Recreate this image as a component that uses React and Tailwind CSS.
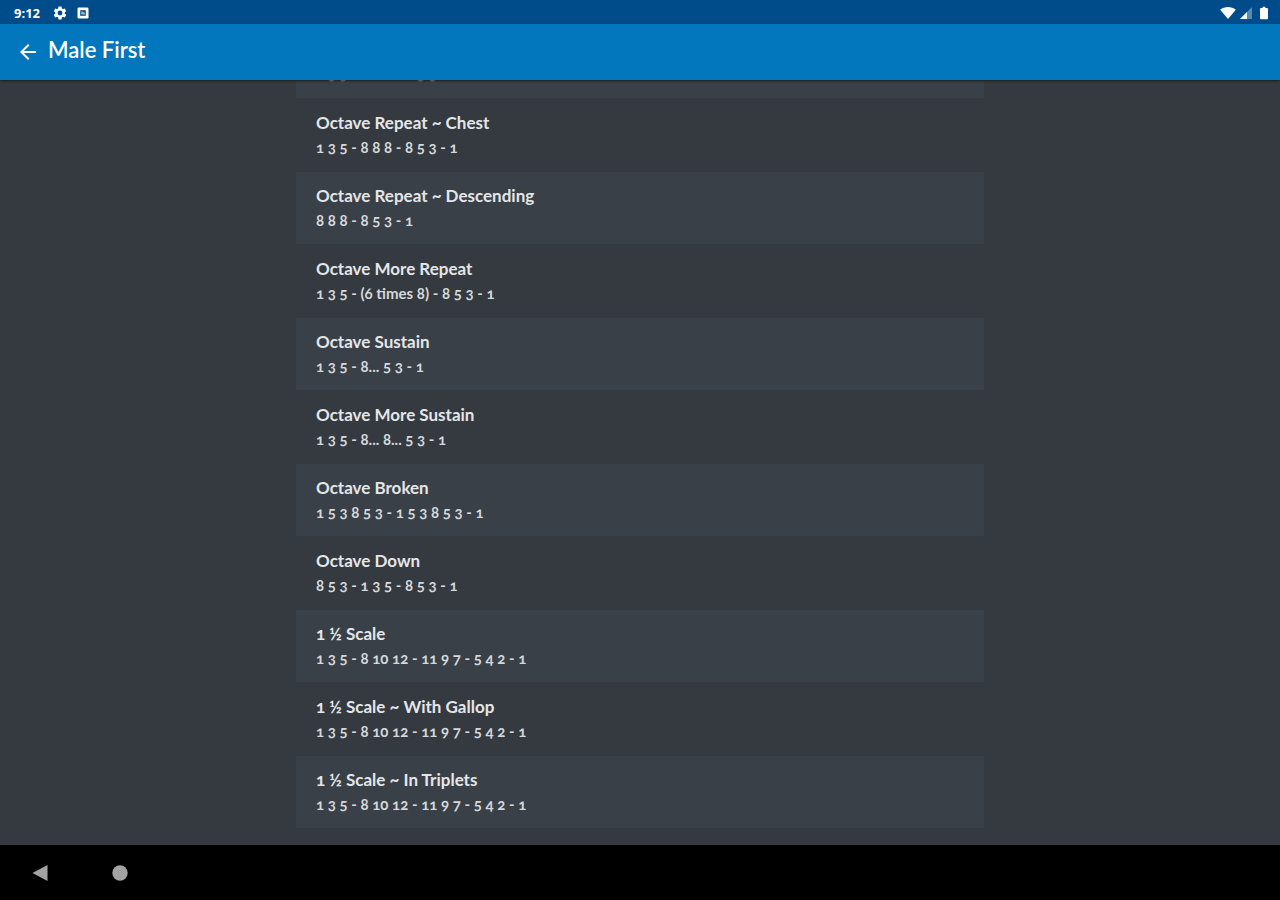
import React from "react";

const exercises = [
  { title: "Octave Repeat", notes: "1 3 5 - 8 8 8 - 8 5 3 - 1" },
  { title: "Octave Repeat ~ Chest", notes: "1 3 5 - 8 8 8 - 8 5 3 - 1" },
  { title: "Octave Repeat ~ Descending", notes: "8 8 8 - 8 5 3 - 1" },
  { title: "Octave More Repeat", notes: "1 3 5 - (6 times 8) - 8 5 3 - 1" },
  { title: "Octave Sustain", notes: "1 3 5 - 8... 5 3 - 1" },
  { title: "Octave More Sustain", notes: "1 3 5 - 8... 8... 5 3 - 1" },
  { title: "Octave Broken", notes: "1 5 3 8 5 3 - 1 5 3 8 5 3 - 1" },
  { title: "Octave Down", notes: "8 5 3 - 1 3 5 - 8 5 3 - 1" },
  { title: "1 ½ Scale", notes: "1 3 5 - 8 10 12 - 11 9 7 - 5 4 2 - 1" },
  { title: "1 ½ Scale ~ With Gallop", notes: "1 3 5 - 8 10 12 - 11 9 7 - 5 4 2 - 1" },
  { title: "1 ½ Scale ~ In Triplets", notes: "1 3 5 - 8 10 12 - 11 9 7 - 5 4 2 - 1" },
];

const StatusBar = () => (
  <div className="flex h-6 shrink-0 items-center justify-between bg-[#004c8a] pt-px pr-3 pl-3.5 text-white">
    <div className="flex items-center gap-3">
      <span className="font-['Open_Sans',sans-serif] text-[13px] leading-4 font-bold">9:12</span>
      <svg viewBox="0 0 24 24" className="size-4" fill="currentColor" aria-hidden="true">
        <path d="M19.14 12.94c.04-.3.06-.61.06-.94 0-.32-.02-.64-.07-.94l2.03-1.58a.49.49 0 0 0 .12-.61l-1.92-3.32a.49.49 0 0 0-.59-.22l-2.39.96c-.5-.38-1.03-.7-1.62-.94l-.36-2.54a.48.48 0 0 0-.48-.41h-3.84a.47.47 0 0 0-.47.41l-.36 2.54c-.59.24-1.13.57-1.62.94l-2.39-.96a.48.48 0 0 0-.59.22L2.74 8.87a.47.47 0 0 0 .12.61l2.03 1.58c-.05.3-.09.63-.09.94s.02.64.07.94l-2.03 1.58a.49.49 0 0 0-.12.61l1.92 3.32c.12.22.37.29.59.22l2.39-.96c.5.38 1.03.7 1.62.94l.36 2.54c.05.24.24.41.48.41h3.84c.24 0 .44-.17.47-.41l.36-2.54c.59-.24 1.13-.56 1.62-.94l2.39.96c.22.08.47 0 .59-.22l1.92-3.32a.47.47 0 0 0-.12-.61zM12 15.6a3.6 3.6 0 1 1 0-7.2 3.6 3.6 0 0 1 0 7.2z" />
      </svg>
      <svg viewBox="0 0 12 12" className="-ml-1 box-content size-3 pl-px" aria-hidden="true">
        <rect x="0.5" y="0.5" width="11" height="11" rx="1.2" fill="currentColor" />
        <path d="M3.2 3.2h5.6v5.6h-5.6z" fill="#004c8a" />
        <path d="M4.2 4.2l3.6 1.2v2.4l-3.6-.6z" fill="currentColor" opacity="0.6" />
      </svg>
    </div>
    <div className="flex items-center gap-1">
      <svg viewBox="0 0 17 13" className="h-3 w-4" fill="currentColor" aria-hidden="true">
        <path d="M8.5 13L0 3C5-1 12-1 17 3z" />
      </svg>
      <svg viewBox="0 0 12 12" className="size-3" fill="currentColor" aria-hidden="true">
        <path d="M0 12L12 0v12z" opacity="0.35" />
        <path d="M0 12L7 5v7z" />
      </svg>
      <svg viewBox="0 0 9 14" className="ml-1 h-3.5 w-2" fill="currentColor" aria-hidden="true">
        <path d="M3 0h3v1.5h2a1 1 0 0 1 1 1V13a1 1 0 0 1-1 1H1a1 1 0 0 1-1-1V2.5a1 1 0 0 1 1-1h2z" />
      </svg>
    </div>
  </div>
);

const TopBar = ({ title }) => (
  <header className="z-10 flex h-14 shrink-0 items-center gap-2 bg-[#0277bd] pl-4 text-white shadow-[0_1px_2px_#1c1d18]">
    <button type="button" aria-label="Back" className="flex size-6 items-center justify-center">
      <svg viewBox="0 0 24 24" className="size-6" fill="currentColor" aria-hidden="true">
        <path d="M20 11H7.83l5.59-5.59L12 4l-8 8 8 8 1.41-1.41L7.83 13H20z" />
      </svg>
    </button>
    <h1 className="pb-1 text-[22px] leading-7 font-semibold">{title}</h1>
  </header>
);

const ExerciseRow = ({ title, notes }) => (
  <li className="shrink-0 even:bg-[#353940] odd:bg-[#3a4047]">
    <button type="button" className="block w-full px-5 py-3 text-left oldstyle-nums">
      <span className="block text-[17px] leading-6 font-bold text-[#e4e6e8]">{title}</span>
      <span className="block text-[15px] leading-6 font-bold text-[#d6d9dc]">{notes}</span>
    </button>
  </li>
);

const NavBar = () => (
  <nav className="flex h-[55px] shrink-0 items-center gap-14 bg-black pl-7 text-[#a3a3a3]">
    <button type="button" aria-label="Back" className="flex size-6 items-center justify-center">
      <svg viewBox="0 0 16 16" className="size-4" fill="currentColor" aria-hidden="true">
        <path d="M0.5 8L15.5 0v16z" />
      </svg>
    </button>
    <button type="button" aria-label="Home" className="flex size-6 items-center justify-center">
      <svg viewBox="0 0 16 16" className="size-4" fill="currentColor" aria-hidden="true">
        <circle cx="8" cy="8" r="7.7" />
      </svg>
    </button>
  </nav>
);

const App = () => {
  return (
    <div className="flex h-screen flex-col bg-[#353a40] font-['Lato',sans-serif]">
      <StatusBar />
      <TopBar title="Male First" />
      {/* list is scrolled to its end */}
      <main className="flex min-h-0 grow flex-col justify-end overflow-hidden px-4 pb-[17px]">
        <ul className="mx-auto flex w-full max-w-[688px] flex-col gap-px">
          {exercises.map((exercise) => (
            <ExerciseRow key={exercise.title} {...exercise} />
          ))}
        </ul>
      </main>
      <NavBar />
    </div>
  );
};

export default App;
